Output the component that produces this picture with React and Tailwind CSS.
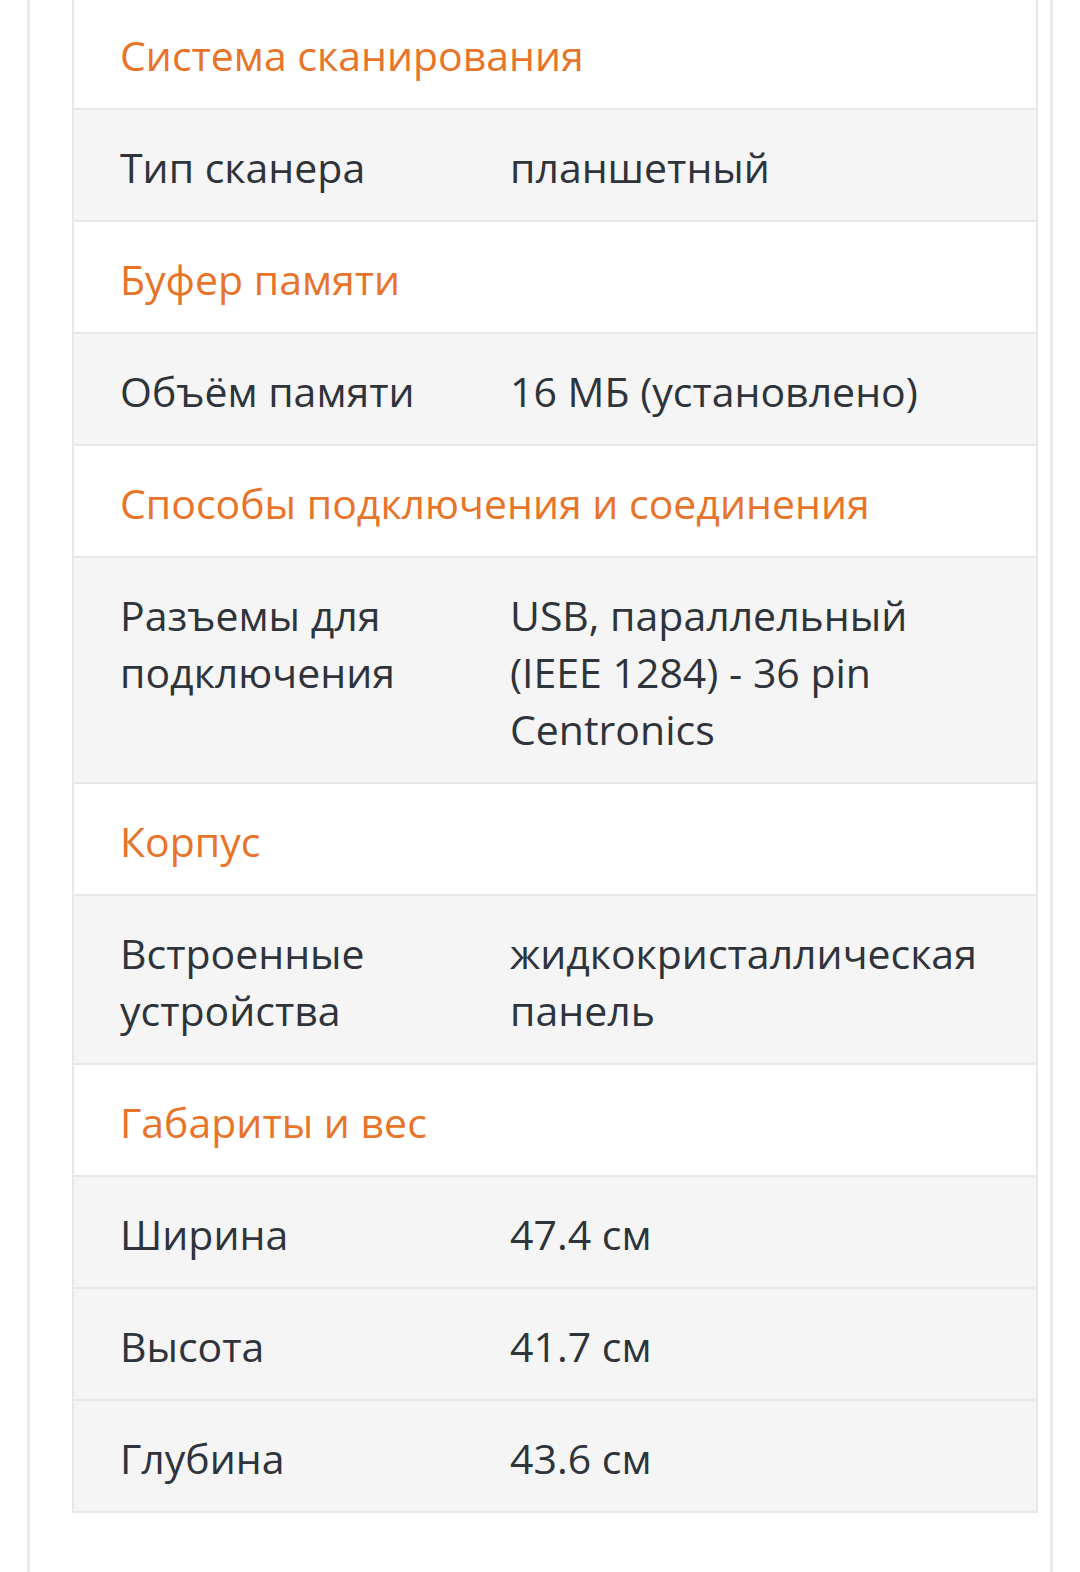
const sections = [
  {
    title: "Система сканирования",
    rows: [["Тип сканера", "планшетный"]],
  },
  {
    title: "Буфер памяти",
    rows: [["Объём памяти", "16 МБ (установлено)"]],
  },
  {
    title: "Способы подключения и соединения",
    rows: [["Разъемы для подключения", "USB, параллельный (IEEE 1284) - 36 pin Centronics"]],
  },
  {
    title: "Корпус",
    rows: [["Встроенные устройства", "жидкокристаллическая панель"]],
  },
  {
    title: "Габариты и вес",
    rows: [
      ["Ширина", "47.4 см"],
      ["Высота", "41.7 см"],
      ["Глубина", "43.6 см"],
    ],
  },
];

const App = () => {
  return (
    <div className="min-h-[1572px] bg-white font-['Open_Sans',sans-serif]">
      <div className="ml-[27px] mr-[27px] min-h-[1572px] border-x-[3px] border-[#ebebeb] pb-[60px] overflow-hidden">
        <div className="-mt-[2px] ml-[42px] mr-[12px] border-[2px] border-t-0 border-[#e8e8e8]">
          {sections.map((section, i) => (
            <div key={i}>
              {/* Section header */}
              <div className={`px-[46px] pt-[29px] pb-[24px] bg-white text-[#e8742a] text-[41px] leading-[57px] ${i > 0 ? "border-t-[2px] border-[#e8e8e8]" : ""}`}>
                {section.title}
              </div>
              {/* Spec rows */}
              {section.rows.map(([label, value], j) => (
                <div
                  key={j}
                  className="flex border-t-[2px] border-[#e8e8e8] bg-[#f5f5f6] text-[#2f333a] text-[41px] leading-[57px]"
                >
                  <div className="w-[436px] shrink-0 pl-[46px] pr-[20px] pt-[29px] pb-[24px]">{label}</div>
                  <div className="flex-1 pr-[44px] pt-[29px] pb-[24px]">{value}</div>
                </div>
              ))}
            </div>
          ))}
        </div>
      </div>
    </div>
  );
};

export default App;
